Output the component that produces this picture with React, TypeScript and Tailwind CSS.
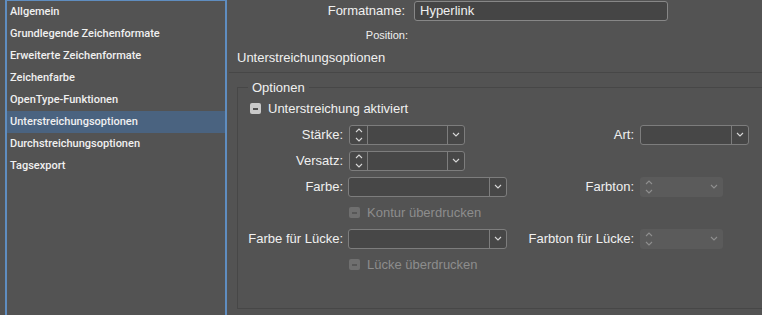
import React from "react";

const items = [
  "Allgemein",
  "Grundlegende Zeichenformate",
  "Erweiterte Zeichenformate",
  "Zeichenfarbe",
  "OpenType-Funktionen",
  "Unterstreichungsoptionen",
  "Durchstreichungsoptionen",
  "Tagsexport",
];

const Chevron = ({ up = false, color = "#d8d8d8" }: { up?: boolean; color?: string }) => (
  <svg width="8" height="5" viewBox="0 0 8 5" className="block">
    <path d={up ? "M1 4 L4 1 L7 4" : "M1 1 L4 4 L7 1"} fill="none" stroke={color} strokeWidth="1.1" />
  </svg>
);

const Stepper = ({ color }: { color?: string }) => (
  <div className="flex h-full w-[17px] flex-col items-center justify-center gap-[4px]">
    <Chevron up color={color} />
    <Chevron color={color} />
  </div>
);

// combobox, optionally with a stepper on the left
const Combo = ({ w, stepper = false }: { w: string; stepper?: boolean }) => (
  <div className={`flex h-[20px] ${w} rounded-[3px] border border-[#7d7d7d] bg-[#474747]`}>
    {stepper && <div className="border-r border-[#7d7d7d]"><Stepper /></div>}
    <div className="flex-1" />
    <div className="flex w-[17px] items-center justify-center border-l border-[#7d7d7d]">
      <Chevron />
    </div>
  </div>
);

const DisabledSpin = () => (
  <div className="flex h-[20px] w-[83px] items-center rounded-[3px] bg-[#5b5b5b]">
    <Stepper color="#8f8f8f" />
    <div className="flex-1" />
    <div className="mr-[5px]"><Chevron color="#8f8f8f" /></div>
  </div>
);

const Check = ({ label, disabled = false }: { label: string; disabled?: boolean }) => (
  <div className={`flex items-center gap-[7px] ${disabled ? "text-[#8d8d8d]" : "text-[#f0f0f0]"}`}>
    <div className={`flex h-[11px] w-[11px] items-center justify-center rounded-[2px] ${disabled ? "bg-[#6f6f6f]" : "bg-[#c9c9c9]"}`}>
      <div className={`h-[2px] w-[5px] ${disabled ? "bg-[#575757]" : "bg-[#505050]"}`} />
    </div>
    <span>{label}</span>
  </div>
);

export default function App() {
  return (
    <div className="flex h-[315px] w-[762px] overflow-hidden bg-[#535353] font-['Liberation_Sans',Arial,sans-serif] text-[13px] text-[#f0f0f0]">
      {/* category list */}
      <div className="ml-[5px] mt-[-1px] h-[330px] w-[222px] shrink-0 border-2 border-[#5f8dc0]">
        {items.map((it) => (
          <div
            key={it}
            className={`flex h-[22px] items-center pl-[3px] font-['Roboto',sans-serif] text-[11px] font-medium ${it === "Unterstreichungsoptionen" ? "bg-[#4a6380]" : ""}`}
          >
            {it}
          </div>
        ))}
      </div>

      {/* settings */}
      <div className="flex flex-1 flex-col pl-[10px]">
        <div className="mt-[1px] flex h-[20px] items-center">
          <div className="w-[168px] text-right">Formatname:</div>
          <div className="ml-[9px] flex h-[20px] w-[254px] items-center rounded-[3px] border border-[#878787] bg-[#454545] pl-[5px]">
            Hyperlink
          </div>
        </div>
        <div className="mt-[6px] w-[171px] text-right text-[11px]">Position:</div>
        <div className="mt-[4px]">Unterstreichungsoptionen</div>
        <div className="-ml-[8px] mt-[5px] h-px bg-[#474747]" />

        <fieldset className="mr-[-10px] mt-[5px] h-[231px] border border-r-0 border-[#474747]">
          <legend className="ml-[10px] px-[4px]">Optionen</legend>
          <div className="ml-[12px] mt-[1px] flex h-[20px] items-center">
            <Check label="Unterstreichung aktiviert" />
          </div>
          <div className="mt-[6px] grid grid-cols-[105px_164px_127px_auto] items-center gap-y-[6px]">
            <div className="text-right">Stärke:</div>
            <div className="ml-[6px]"><Combo w="w-[116px]" stepper /></div>
            <div className="text-right">Art:</div>
            <div className="ml-[6px]"><Combo w="w-[109px]" /></div>

            <div className="text-right">Versatz:</div>
            <div className="ml-[6px]"><Combo w="w-[116px]" stepper /></div>
            <div />
            <div />

            <div className="text-right">Farbe:</div>
            <div className="ml-[5px]"><Combo w="w-[159px]" /></div>
            <div className="text-right">Farbton:</div>
            <div className="ml-[6px]"><DisabledSpin /></div>

            <div className="h-[20px]" />
            <div className="ml-[6px]"><Check label="Kontur überdrucken" disabled /></div>
            <div />
            <div />

            <div className="text-right">Farbe für Lücke:</div>
            <div className="ml-[5px]"><Combo w="w-[159px]" /></div>
            <div className="text-right">Farbton für Lücke:</div>
            <div className="ml-[6px]"><DisabledSpin /></div>

            <div className="h-[20px]" />
            <div className="ml-[6px]"><Check label="Lücke überdrucken" disabled /></div>
            <div />
            <div />
          </div>
        </fieldset>
      </div>
    </div>
  );
}
